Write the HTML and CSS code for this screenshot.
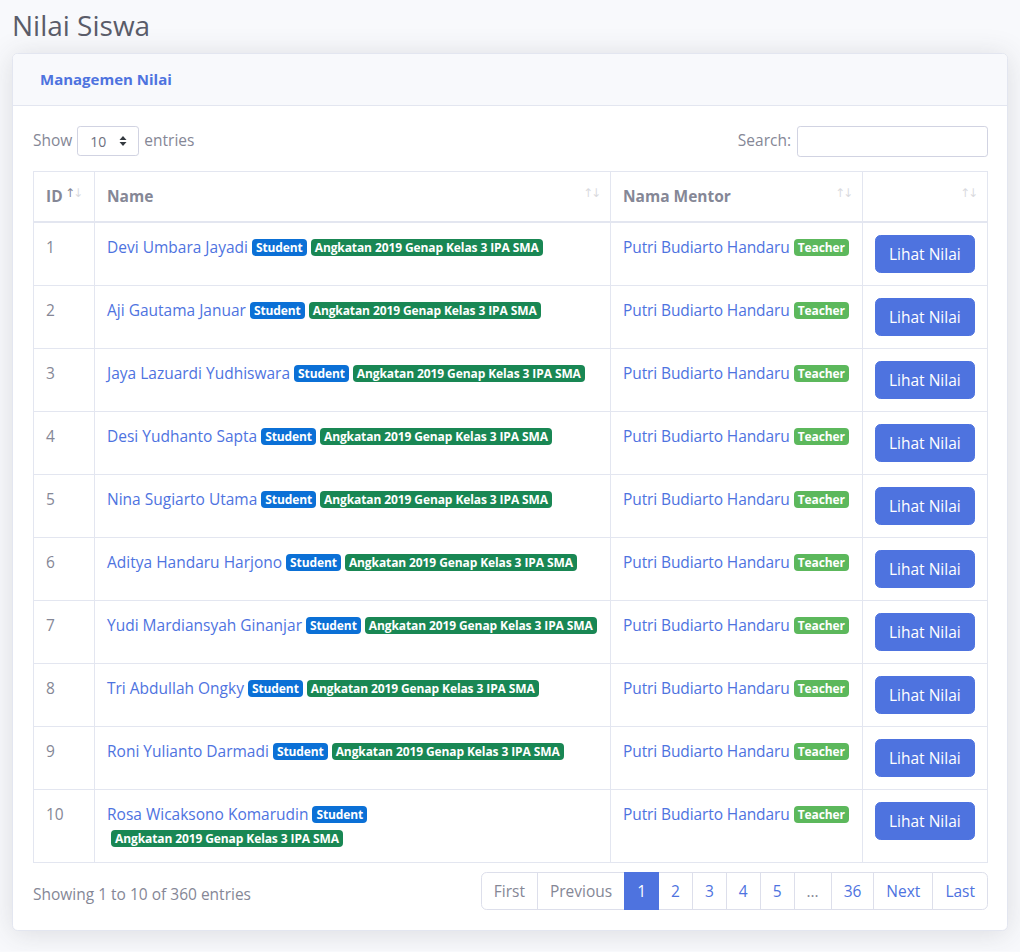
FILE: index.html
```html
<!DOCTYPE html>
<html lang="id">
<head>
<meta charset="utf-8">
<title>Nilai Siswa</title>
<link rel="stylesheet" href="styles.css">
</head>
<body>
<div class="page">
  <h1 class="page-title">Nilai Siswa</h1>
  <div class="card">
    <div class="card-header"><h6 class="card-title">Managemen Nilai</h6></div>
    <div class="card-body">
      <div class="dt-top">
        <label class="dt-length">Show
          <span class="select-wrap">
            <select class="select-sm"><option>10</option><option>25</option><option>50</option><option>100</option></select>
            <svg class="select-arrow" width="8" height="12" viewBox="0 0 8 12"><path d="M4 1 L7.5 5 H0.5 Z M4 11 L7.5 7 H0.5 Z" fill="#343a40"/></svg>
          </span>
        entries</label>
        <label class="dt-search">Search:<input type="search" class="search-input"></label>
      </div>
      <table class="dt-table">
        <colgroup><col class="c-id"><col class="c-name"><col class="c-mentor"><col class="c-act"></colgroup>
        <thead>
          <tr>
            <th class="sort asc">ID</th>
            <th class="sort">Name</th>
            <th class="sort">Nama Mentor</th>
            <th class="sort"></th>
          </tr>
        </thead>
        <tbody>
          <tr><td>1</td><td><a href="#" class="lnk">Devi Umbara Jayadi</a><span class="badge b-student">Student</span><span class="badge b-class">Angkatan 2019 Genap Kelas 3 IPA SMA</span></td><td class="mentor"><a href="#" class="lnk">Putri Budiarto Handaru</a><span class="badge b-teacher">Teacher</span></td><td><a href="#" class="btn">Lihat Nilai</a></td></tr>
          <tr><td>2</td><td><a href="#" class="lnk">Aji Gautama Januar</a><span class="badge b-student">Student</span><span class="badge b-class">Angkatan 2019 Genap Kelas 3 IPA SMA</span></td><td class="mentor"><a href="#" class="lnk">Putri Budiarto Handaru</a><span class="badge b-teacher">Teacher</span></td><td><a href="#" class="btn">Lihat Nilai</a></td></tr>
          <tr><td>3</td><td><a href="#" class="lnk">Jaya Lazuardi Yudhiswara</a><span class="badge b-student">Student</span><span class="badge b-class">Angkatan 2019 Genap Kelas 3 IPA SMA</span></td><td class="mentor"><a href="#" class="lnk">Putri Budiarto Handaru</a><span class="badge b-teacher">Teacher</span></td><td><a href="#" class="btn">Lihat Nilai</a></td></tr>
          <tr><td>4</td><td><a href="#" class="lnk">Desi Yudhanto Sapta</a><span class="badge b-student">Student</span><span class="badge b-class">Angkatan 2019 Genap Kelas 3 IPA SMA</span></td><td class="mentor"><a href="#" class="lnk">Putri Budiarto Handaru</a><span class="badge b-teacher">Teacher</span></td><td><a href="#" class="btn">Lihat Nilai</a></td></tr>
          <tr><td>5</td><td><a href="#" class="lnk">Nina Sugiarto Utama</a><span class="badge b-student">Student</span><span class="badge b-class">Angkatan 2019 Genap Kelas 3 IPA SMA</span></td><td class="mentor"><a href="#" class="lnk">Putri Budiarto Handaru</a><span class="badge b-teacher">Teacher</span></td><td><a href="#" class="btn">Lihat Nilai</a></td></tr>
          <tr><td>6</td><td><a href="#" class="lnk">Aditya Handaru Harjono</a><span class="badge b-student">Student</span><span class="badge b-class">Angkatan 2019 Genap Kelas 3 IPA SMA</span></td><td class="mentor"><a href="#" class="lnk">Putri Budiarto Handaru</a><span class="badge b-teacher">Teacher</span></td><td><a href="#" class="btn">Lihat Nilai</a></td></tr>
          <tr><td>7</td><td><a href="#" class="lnk">Yudi Mardiansyah Ginanjar</a><span class="badge b-student">Student</span><span class="badge b-class">Angkatan 2019 Genap Kelas 3 IPA SMA</span></td><td class="mentor"><a href="#" class="lnk">Putri Budiarto Handaru</a><span class="badge b-teacher">Teacher</span></td><td><a href="#" class="btn">Lihat Nilai</a></td></tr>
          <tr><td>8</td><td><a href="#" class="lnk">Tri Abdullah Ongky</a><span class="badge b-student">Student</span><span class="badge b-class">Angkatan 2019 Genap Kelas 3 IPA SMA</span></td><td class="mentor"><a href="#" class="lnk">Putri Budiarto Handaru</a><span class="badge b-teacher">Teacher</span></td><td><a href="#" class="btn">Lihat Nilai</a></td></tr>
          <tr><td>9</td><td><a href="#" class="lnk">Roni Yulianto Darmadi</a><span class="badge b-student">Student</span><span class="badge b-class">Angkatan 2019 Genap Kelas 3 IPA SMA</span></td><td class="mentor"><a href="#" class="lnk">Putri Budiarto Handaru</a><span class="badge b-teacher">Teacher</span></td><td><a href="#" class="btn">Lihat Nilai</a></td></tr>
          <tr><td>10</td><td><a href="#" class="lnk">Rosa Wicaksono Komarudin</a><span class="badge b-student">Student</span><span class="badge b-class">Angkatan 2019 Genap Kelas 3 IPA SMA</span></td><td class="mentor"><a href="#" class="lnk">Putri Budiarto Handaru</a><span class="badge b-teacher">Teacher</span></td><td><a href="#" class="btn">Lihat Nilai</a></td></tr>
        </tbody>
      </table>
      <div class="dt-bottom">
        <div class="dt-info">Showing 1 to 10 of 360 entries</div>
        <ul class="pagination">
          <li class="pg disabled"><a href="#">First</a></li>
          <li class="pg disabled"><a href="#">Previous</a></li>
          <li class="pg active"><a href="#">1</a></li>
          <li class="pg"><a href="#">2</a></li>
          <li class="pg"><a href="#">3</a></li>
          <li class="pg"><a href="#">4</a></li>
          <li class="pg"><a href="#">5</a></li>
          <li class="pg disabled"><a href="#">…</a></li>
          <li class="pg"><a href="#">36</a></li>
          <li class="pg"><a href="#">Next</a></li>
          <li class="pg"><a href="#">Last</a></li>
        </ul>
      </div>
    </div>
  </div>
</div>
</body>
</html>
```

FILE: styles.css
```css
* { box-sizing: border-box; }
html, body {
  margin: 0;
  background: #f8f9fc;
  font-family: "Open Sans", "Noto Sans", sans-serif;
  font-size: 16px;
  line-height: 1.5;
  color: #858796;
}
.page {
  padding: 9px 12px 20px;
}
.page-title {
  margin: 0 0 10px;
  font-size: 28px;
  font-weight: 400;
  line-height: 1.2;
  color: #5a5c69;
}
.card {
  background: #fff;
  border: 1px solid #e3e6f0;
  border-radius: 5.6px;
  box-shadow: 0 2.4px 28px 0 rgba(58, 59, 69, 0.15);
  overflow: hidden;
}
.card-header {
  background: #f8f9fc;
  border-bottom: 1px solid #e3e6f0;
  padding: 16px 27px;
}
.card-title {
  margin: 0;
  font-size: 15px;
  font-weight: 700;
  line-height: 19px;
  color: #4e73df;
}
.card-body {
  padding: 20px 19px 20px 20px;
}
.dt-top {
  display: flex;
  justify-content: space-between;
  align-items: center;
  height: 31px;
}
.dt-length, .dt-search {
  display: flex;
  align-items: center;
  font-size: 15.5px;
}
.select-wrap {
  position: relative;
  display: inline-block;
  margin: 0 5px 0 5px;
}
.select-sm {
  appearance: none;
  -webkit-appearance: none;
  width: 62px;
  height: 30px;
  padding: 0 0 0 12px;
  border: 1px solid #d1d3e2;
  border-radius: 3.2px;
  background: #fff;
  font-family: inherit;
  font-size: 14px;
  color: #6e707e;
}
.select-arrow {
  position: absolute;
  right: 12px;
  top: 9px;
  pointer-events: none;
}
.search-input {
  width: 191px;
  height: 31px;
  margin-left: 6px;
  border: 1px solid #d1d3e2;
  border-radius: 3.2px;
  background: #fff;
}
.dt-table {
  width: 100%;
  margin-top: 14px;
  border-collapse: collapse;
  table-layout: fixed;
  border: 1px solid #e3e6f0;
}
.c-id { width: 61px; }
.c-name { width: 516px; }
.c-mentor { width: 252px; }
.c-act { width: auto; }
.dt-table th, .dt-table td {
  border: 1px solid #e3e6f0;
  padding: 12px;
  vertical-align: top;
  text-align: left;
}
.dt-table th {
  position: relative;
  padding-right: 30px;
  border-bottom: 2px solid #e3e6f0;
  font-weight: 700;
  color: #858796;
  font-size: 15.5px;
  line-height: 25px;
}
.dt-table th.sort::before,
.dt-table th.sort::after {
  position: absolute;
  top: 13px;
  font-family: "DejaVu Sans", sans-serif;
  font-size: 12px;
  font-weight: 400;
  line-height: 16px;
  opacity: 0.3;
}
.dt-table th.sort::before { content: "\2191"; right: 17px; }
.dt-table th.sort::after { content: "\2193"; right: 9px; }
.dt-table th.asc { padding-right: 12px; }
.dt-table th.asc::before { opacity: 1; right: 19px; }
.dt-table th.asc::after { right: 11px; }
.dt-table td {
  font-size: 15.5px;
  line-height: 24px;
}
.dt-table td.mentor {
  white-space: nowrap;
  letter-spacing: -0.1px;
}
.lnk {
  color: #4e73df;
  text-decoration: none;
}
.badge {
  display: inline-block;
  margin-left: 4px;
  padding: 3px 4px 2px;
  font-size: 12px;
  letter-spacing: -0.1px;
  font-weight: 700;
  line-height: 1;
  color: #fff;
  border-radius: 4px;
  white-space: nowrap;
  vertical-align: 1px;
}
.b-student { background: #0b70d6; }
.b-class { background: #198754; }
.b-teacher { background: #5cb85c; }
.btn {
  display: block;
  width: max-content;
  padding: 6px 13px;
  font-size: 15.5px;
  line-height: 24px;
  color: #fff;
  background: #4e73df;
  border: 1px solid #4e73df;
  border-radius: 5.6px;
  text-decoration: none;
}
.dt-bottom {
  display: flex;
  justify-content: space-between;
  align-items: flex-start;
  margin-top: 7px;
}
.dt-info {
  padding-top: 13px;
  font-size: 15.5px;
}
.pagination {
  display: flex;
  list-style: none;
  margin: 2px 0 0;
  padding: 0;
}
.pg a {
  display: block;
  margin-left: -1px;
  padding: 8px 12px;
  line-height: 20px;
  font-size: 15.5px;
  color: #4e73df;
  background: #fff;
  border: 1px solid #dddfeb;
  text-decoration: none;
}
.pg:first-child a {
  margin-left: 0;
  border-radius: 5.6px 0 0 5.6px;
}
.pg:last-child a {
  border-radius: 0 5.6px 5.6px 0;
}
.pg.disabled a { color: #858796; }
.pg.active a {
  position: relative;
  color: #fff;
  background: #4e73df;
  border-color: #4e73df;
}
```
